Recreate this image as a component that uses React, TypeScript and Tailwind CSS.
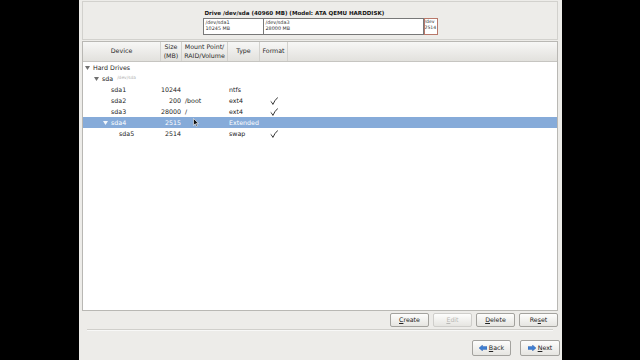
import React from 'react';

const Tri = ({ white }: { white?: boolean }) => (
  <svg width="5" height="4" viewBox="0 0 5 4" className="block">
    <path d="M0 0 L5 0 L2.5 4 Z" fill={white ? '#f4f7fb' : '#707070'} />
  </svg>
);

const Check = () => (
  <svg width="8" height="8" viewBox="0 0 8 8" className="block">
    <path d="M1 4.6 Q2.2 5.4 2.9 7.4 Q4.6 3.2 7.6 0.6" stroke="#1e1e1e" strokeWidth="0.9" fill="none" strokeLinecap="round" strokeLinejoin="round" />
  </svg>
);

type Row = {
  level: number;
  tri?: boolean;
  name: string;
  extra?: string;
  size?: string;
  mount?: string;
  type?: string;
  fmt?: boolean;
  sel?: boolean;
};

const rows: Row[] = [
  { level: 0, tri: true, name: 'Hard Drives' },
  { level: 1, tri: true, name: 'sda', extra: '/dev/sda' },
  { level: 2, name: 'sda1', size: '10244', type: 'ntfs' },
  { level: 2, name: 'sda2', size: '200', mount: '/boot', type: 'ext4', fmt: true },
  { level: 2, name: 'sda3', size: '28000', mount: '/', type: 'ext4', fmt: true },
  { level: 2, tri: true, name: 'sda4', size: '2515', type: 'Extended', sel: true },
  { level: 3, name: 'sda5', size: '2514', type: 'swap', fmt: true },
];

const pls = ['pl-[2px]', 'pl-[11px]', 'pl-[20px]', 'pl-[28px]'];

const Btn = ({ children, disabled, w }: { children: React.ReactNode; disabled?: boolean; w: string }) => (
  <div
    className={`${w} h-full flex items-center justify-center gap-[2px] rounded-[2px] border border-[#a3a29e] bg-gradient-to-b from-[#fdfdfc] to-[#e6e5e1] ${
      disabled ? 'text-[#b9b8b4] border-[#cfcecb]' : 'text-[#222]'
    }`}
  >
    {children}
  </div>
);

const ArrowL = () => (
  <svg width="8" height="6" viewBox="0 0 8 6" className="block">
    <path d="M0 3 L3.5 0 L3.5 1.6 L8 1.6 L8 4.4 L3.5 4.4 L3.5 6 Z" fill="#3f7fd3" stroke="#2a5ea8" strokeWidth="0.4" />
  </svg>
);
const ArrowR = () => (
  <svg width="8" height="6" viewBox="0 0 8 6" className="block">
    <path d="M8 3 L4.5 0 L4.5 1.6 L0 1.6 L0 4.4 L4.5 4.4 L4.5 6 Z" fill="#3f7fd3" stroke="#2a5ea8" strokeWidth="0.4" />
  </svg>
);

export default function App() {
  return (
    <div className="w-[640px] h-[360px] bg-black flex font-['DejaVu_Sans',sans-serif] text-[6.3px] text-[#1c1c1c] overflow-hidden">
      <div className="ml-[79px] w-[483px] h-full bg-[#edece9] flex flex-col pl-[3px] pr-[4px]">
        {/* top drive panel */}
        <div className="mt-[1px] h-[39px] border border-[#d2d1cd] flex justify-center">
          <div className="w-[235px] pt-[7px] flex flex-col">
            <div className="h-[9px] leading-[9px] text-[5.55px] font-bold whitespace-nowrap pl-[2px] text-[#151515]">
              Drive /dev/sda (40960 MB) (Model: ATA QEMU HARDDISK)
            </div>
            <div className="h-[17px] flex text-[4.9px] leading-[6px] text-[#333]">
              <div className="w-[61px] h-full border border-[#787878] bg-white pl-[2px] overflow-hidden whitespace-nowrap">
                <div>/dev/sda1</div>
                <div>10245 MB</div>
              </div>
              <div className="w-[160px] h-full border-y border-r border-[#787878] bg-white pl-[2px] overflow-hidden whitespace-nowrap">
                <div>/dev/sda3</div>
                <div>28000 MB</div>
              </div>
              <div className="w-[14px] h-full border border-[#b8786a] bg-white overflow-hidden whitespace-nowrap">
                <div className="text-[4.6px]">/dev</div>
                <div className="text-[4.6px]">2514</div>
              </div>
            </div>
          </div>
        </div>

        {/* tree view */}
        <div className="relative mt-[1px] h-[270px] border border-[#b9b8b4] bg-white flex flex-col">
          <div className="h-[20px] flex border-b border-[#c6c5c1] bg-gradient-to-b from-[#f7f7f6] to-[#e2e1dd] leading-[8.5px] text-[#2a2a2a]">
            <div className="w-[78px] border-r border-[#d3d2ce] flex items-center justify-center">Device</div>
            <div className="w-[21px] border-r border-[#d3d2ce] flex items-center justify-center text-center">
              Size
              <br />
              (MB)
            </div>
            <div className="w-[46px] border-r border-[#d3d2ce] flex items-center justify-center text-center whitespace-nowrap">
              Mount Point/
              <br />
              RAID/Volume
            </div>
            <div className="w-[32px] border-r border-[#d3d2ce] flex items-center justify-center">Type</div>
            <div className="w-[28px] border-r border-[#d3d2ce] flex items-center justify-center">Format</div>
            <div className="flex-1" />
          </div>
          {rows.map((r, i) => (
            <div
              key={i}
              className={`h-[11px] flex items-center whitespace-nowrap ${r.sel ? 'bg-[#86abd9] text-white' : ''}`}
            >
              <div className={`w-[78px] flex items-center ${pls[r.level]}`}>
                <div className="w-[8px] flex">{r.tri && <Tri white={r.sel} />}</div>
                <span>{r.name}</span>
                {r.extra && <span className="ml-[4px] text-[4.4px] text-[#b4b4b4]">{r.extra}</span>}
              </div>
              <div className="w-[21px] text-right pr-[1px]">{r.size}</div>
              <div className="w-[46px] pl-[3px]">{r.mount}</div>
              <div className="w-[32px] pl-[1px]">{r.type}</div>
              <div className="w-[28px] flex justify-center">{r.fmt && <Check />}</div>
            </div>
          ))}
          {/* mouse pointer */}
          <svg width="6" height="9" viewBox="0 0 6 9" className="absolute left-[110px] top-[76px]">
            <path d="M0.5 0.5 L0.5 7.5 L2.2 5.8 L3.4 8.5 L4.4 8 L3.3 5.4 L5.5 5.4 Z" fill="#111" stroke="#fff" strokeWidth="0.6" />
          </svg>
        </div>

        {/* partition buttons */}
        <div className="mt-[2px] h-[14px] flex justify-end gap-[4px]">
          <Btn w="w-[39px]">
            <span>
              <span className="underline">C</span>reate
            </span>
          </Btn>
          <Btn w="w-[39px]" disabled>
            <span>
              <span className="underline">E</span>dit
            </span>
          </Btn>
          <Btn w="w-[39px]">
            <span>
              <span className="underline">D</span>elete
            </span>
          </Btn>
          <Btn w="w-[39px]">
            <span>
              Re<span className="underline">s</span>et
            </span>
          </Btn>
        </div>

        <div className="mt-[2px] mx-[5px] h-[2px] border-t border-[#d0cfcb] border-b border-b-[#f8f8f7]" />

        {/* navigation */}
        <div className="mt-[9px] h-[16px] flex justify-end gap-[9px] -mr-[2px]">
          <Btn w="w-[39px]">
            <ArrowL />
            <span>
              <span className="underline">B</span>ack
            </span>
          </Btn>
          <Btn w="w-[40px]">
            <ArrowR />
            <span>
              <span className="underline">N</span>ext
            </span>
          </Btn>
        </div>
      </div>
    </div>
  );
}
